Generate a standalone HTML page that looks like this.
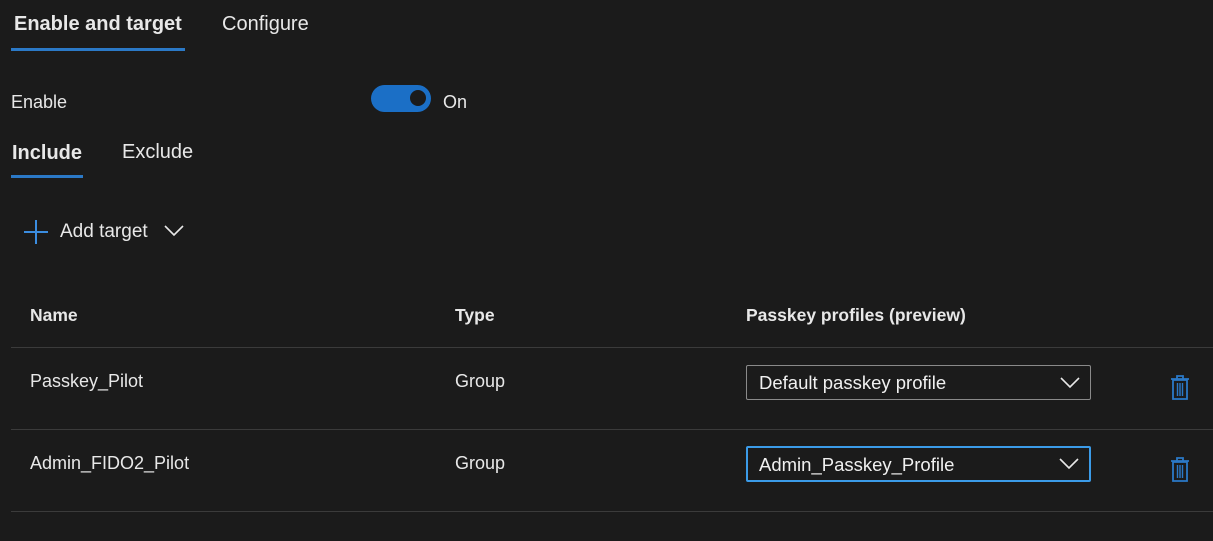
<!DOCTYPE html>
<html><head><style>
body{margin:0;width:1213px;height:541px;background:#1b1b1b;color:#e8e8e8;font-family:"Liberation Sans",sans-serif;position:relative;overflow:hidden}
.a{position:absolute;white-space:nowrap}
.b{font-weight:bold}
.line{position:absolute;left:11px;right:0;height:1px;background:#3b3b3b}
.sel{position:absolute;left:746px;width:345px;height:35px;border:1px solid #8a8a8a;border-radius:2px;box-sizing:border-box;font-size:18.5px;line-height:34px;padding-left:12px;color:#f0f0f0}
.sel svg{position:absolute;right:10px;top:11px}
.bin{position:absolute;left:1170px}
</style></head><body>
<div class="a b" style="left:14px;top:13px;font-size:20px">Enable and target</div>
<div style="position:absolute;left:11px;top:48px;width:174px;height:3px;background:#2b79c7"></div>
<div class="a" style="left:222px;top:13px;font-size:20px">Configure</div>
<div class="a" style="left:11px;top:92px;font-size:18px">Enable</div>
<div style="position:absolute;left:371px;top:85px;width:60px;height:27px;border-radius:14px;background:#1b6fc6"></div>
<div style="position:absolute;left:410px;top:90px;width:16px;height:16px;border-radius:50%;background:#1b1b1b"></div>
<div class="a" style="left:443px;top:92px;font-size:18px">On</div>
<div class="a b" style="left:12px;top:142px;font-size:20px">Include</div>
<div style="position:absolute;left:11px;top:175px;width:72px;height:3px;background:#2b79c7"></div>
<div class="a" style="left:122px;top:141px;font-size:20px">Exclude</div>
<svg class="a" style="left:24px;top:220px" width="24" height="24"><path d="M12 0V24M0 12H24" stroke="#3b8de0" stroke-width="2"/></svg>
<div class="a" style="left:60px;top:221px;font-size:19px">Add target</div>
<svg class="a" style="left:164px;top:225px" width="20" height="12"><path d="M1 1L10 10L19 1" stroke="#e8e8e8" stroke-width="1.6" fill="none"/></svg>
<div class="a b" style="left:30px;top:305px;font-size:17.5px">Name</div>
<div class="a b" style="left:455px;top:305px;font-size:17.5px">Type</div>
<div class="a b" style="left:746px;top:305px;font-size:17.5px">Passkey profiles (preview)</div>
<div class="line" style="top:347px"></div>
<div class="a" style="left:30px;top:371px;font-size:18px">Passkey_Pilot</div>
<div class="a" style="left:455px;top:371px;font-size:18px">Group</div>
<div class="sel" style="top:365px">Default passkey profile<svg width="20" height="12"><path d="M1 1L10 10L19 1" stroke="#e8e8e8" stroke-width="1.6" fill="none"/></svg></div>
<svg class="bin" style="top:375px" width="20" height="26"><path d="M1 4H19M7 4V1H13V4M3 5H17V24H3Z" stroke="#2b79c7" stroke-width="1.8" fill="none"/><path d="M7.5 8V21M10 8V21M12.5 8V21" stroke="#2b79c7" stroke-width="1.4"/></svg>
<div class="line" style="top:429px"></div>
<div class="a" style="left:30px;top:453px;font-size:18px">Admin_FIDO2_Pilot</div>
<div class="a" style="left:455px;top:453px;font-size:18px">Group</div>
<div class="sel" style="top:446px;height:36px;border:2px solid #3b9be8;line-height:34px;padding-left:11px">Admin_Passkey_Profile<svg width="20" height="12" style="top:10px"><path d="M1 1L10 10L19 1" stroke="#e8e8e8" stroke-width="1.6" fill="none"/></svg></div>
<svg class="bin" style="top:457px" width="20" height="26"><path d="M1 4H19M7 4V1H13V4M3 5H17V24H3Z" stroke="#2b79c7" stroke-width="1.8" fill="none"/><path d="M7.5 8V21M10 8V21M12.5 8V21" stroke="#2b79c7" stroke-width="1.4"/></svg>
<div class="line" style="top:511px"></div>
</body></html>
